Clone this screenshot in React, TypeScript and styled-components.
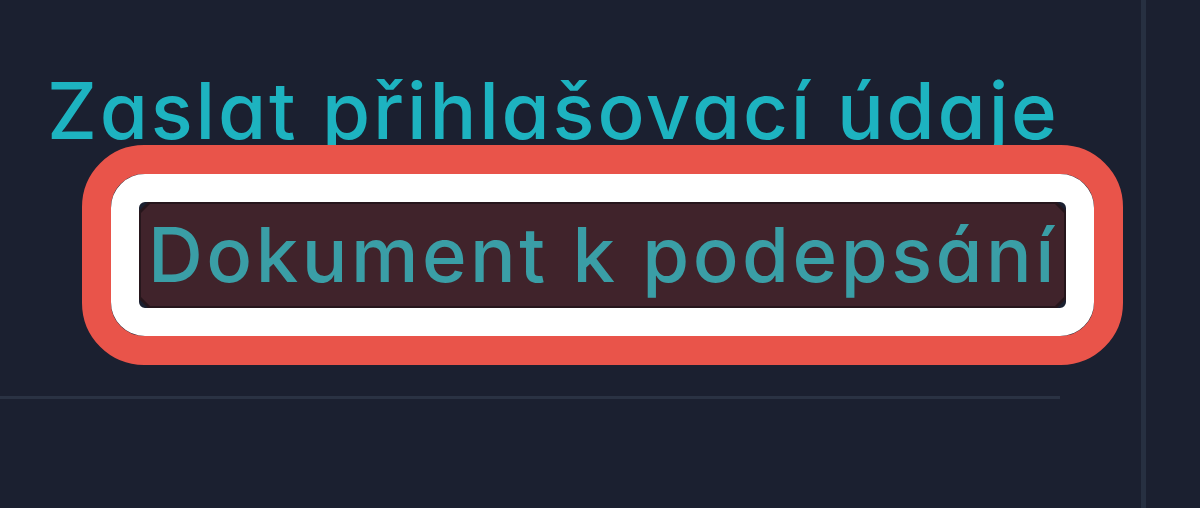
import React from 'react'
import styled, { createGlobalStyle } from 'styled-components'

const GlobalStyle = createGlobalStyle`
  html, body {
    margin: 0;
    padding: 0;
    background: #1b2030;
  }
  body {
    font-family: Inter, "Noto Sans", sans-serif;
    font-feature-settings: 'cv11' 1;
  }
`

const Page = styled.div`
  display: flex;
  width: 1200px;
  height: 508px;
  background: #1b2030;
  overflow: hidden;
`

const Column = styled.div`
  width: 1141px;
  padding-top: 72px;
  box-sizing: border-box;
  display: flex;
  flex-direction: column;
`

const Divider = styled.div`
  width: 5px;
  background: #273041;
`

const Title = styled.div`
  margin: 0 0 -5px 47px;
  font-size: 78px;
  line-height: 78px;
  font-weight: 500;
  letter-spacing: 2.8px;
  color: #1db3c0;
  white-space: nowrap;
`

const Highlight = styled.div`
  margin-left: 82px;
  width: 1041px;
  box-sizing: border-box;
  border: 29px solid #e9544a;
  border-radius: 62px;
  position: relative;
`

const Ring = styled.div`
  border: 28px solid #ffffff;
  border-radius: 34px;
`

const chamfer = `polygon(9px 0, calc(100% - 9px) 0, 100% 9px, 100% calc(100% - 9px), calc(100% - 9px) 100%, 9px 100%, 0 calc(100% - 9px), 0 9px)`

const Outline = styled.div`
  height: 106px;
  padding: 2px;
  box-sizing: border-box;
  background: #26161c;
  clip-path: ${chamfer};
`

const Label = styled.div`
  height: 100%;
  box-sizing: border-box;
  padding: 12px 0 0 7px;
  background: #40232b;
  clip-path: ${chamfer};
  font-size: 76px;
  line-height: 76px;
  font-weight: 500;
  letter-spacing: 3.5px;
  color: #3a9ea6;
  white-space: nowrap;
`

const Rule = styled.div`
  margin-top: 31px;
  width: 1060px;
  height: 3px;
  background: #2a3243;
`

export default function App() {
  return (
    <>
      <GlobalStyle />
      <Page>
        <Column>
          <Title>Zaslat přihlašovací údaje</Title>
          <Highlight>
            <Ring>
              <Outline>
                <Label>Dokument k podepsání</Label>
              </Outline>
            </Ring>
          </Highlight>
          <Rule />
        </Column>
        <Divider />
      </Page>
    </>
  )
}
